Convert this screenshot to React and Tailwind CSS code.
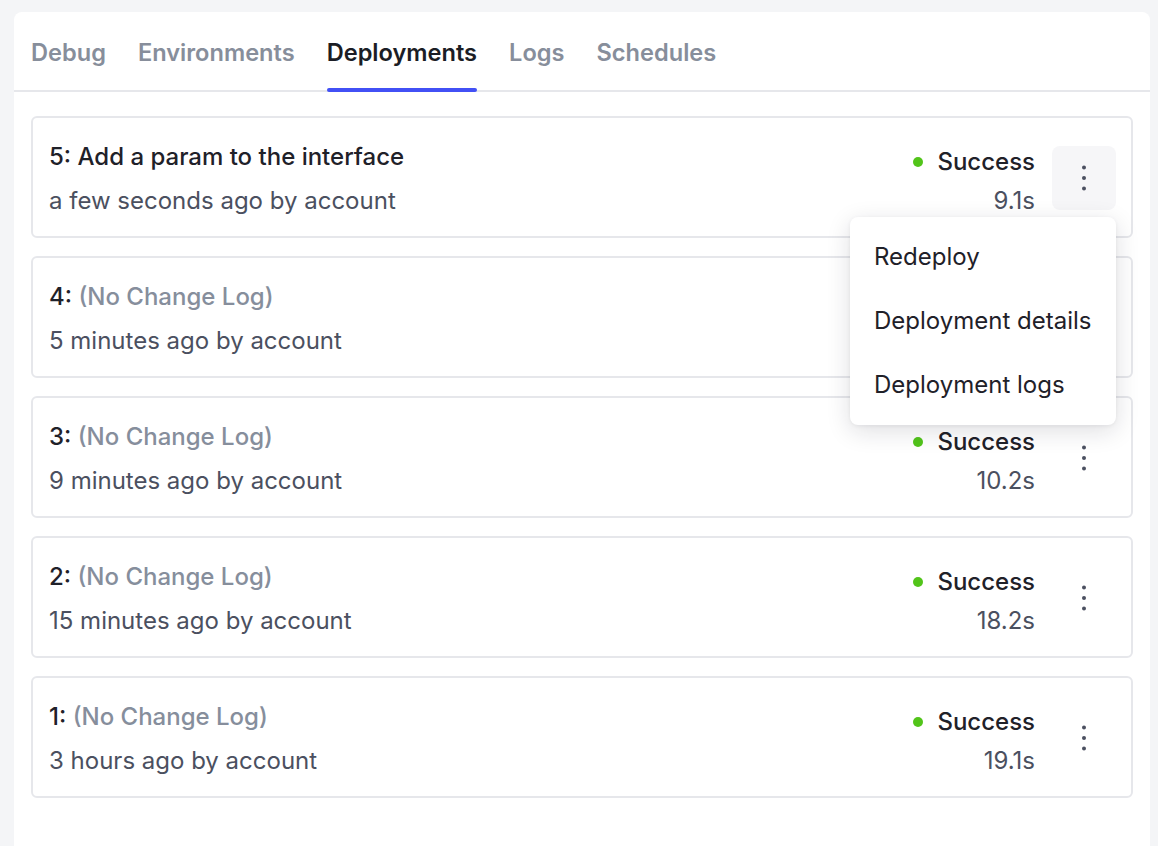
import React from "react";

const deployments = [
  { id: 5, title: "Add a param to the interface", when: "a few seconds ago", time: "9.1s", open: true },
  { id: 4, title: null, when: "5 minutes ago", time: "9.8s" },
  { id: 3, title: null, when: "9 minutes ago", time: "10.2s" },
  { id: 2, title: null, when: "15 minutes ago", time: "18.2s" },
  { id: 1, title: null, when: "3 hours ago", time: "19.1s" },
];

const tabs = ["Debug", "Environments", "Deployments", "Logs", "Schedules"];

function Kebab() {
  return (
    <svg width="6" height="26" viewBox="0 0 6 26" className="text-[#4b5060]">
      <circle cx="3" cy="2.5" r="2" fill="currentColor" />
      <circle cx="3" cy="13" r="2" fill="currentColor" />
      <circle cx="3" cy="23.5" r="2" fill="currentColor" />
    </svg>
  );
}

function Menu() {
  return (
    <div className="absolute right-0 top-[71px] z-20 w-[266px] rounded-lg bg-white py-2 shadow-[0_6px_24px_rgba(20,24,40,0.14),0_1px_4px_rgba(20,24,40,0.06)]">
      {["Redeploy", "Deployment details", "Deployment logs"].map((item) => (
        <div key={item} className="flex h-16 items-center whitespace-nowrap px-6 text-[24px] text-[#1f2129]">
          {item}
        </div>
      ))}
    </div>
  );
}

function DeploymentCard({ d }) {
  return (
    <div className="flex items-start rounded-md border-2 border-[#e6e7eb] bg-white pt-[23px] pb-[21px] pl-4 pr-[15px]">
      <div className="flex flex-1 flex-col gap-4 pt-[2px]">
        <div className="text-[24px] font-medium leading-7 text-[#1f2129]">
          {d.id}:{" "}
          {d.title ? d.title : <span className="text-[#868e9c]">(No Change Log)</span>}
        </div>
        <div className="text-[24px] leading-7 text-[#4b5060]">{d.when} by account</div>
      </div>
      <div className="flex flex-col items-end gap-[11px] pt-[7px]">
        <div className="flex items-center gap-[14px] text-[24px] font-medium leading-7 text-[#1f2129]">
          <span className="h-[10px] w-[10px] rounded-full bg-[#52c41a]" />
          Success
        </div>
        <div className="text-[24px] leading-7 text-[#4b5060]">{d.time}</div>
      </div>
      <div className="relative ml-[17px] self-center">
        <div className={`flex h-16 w-16 items-center justify-center rounded-lg ${d.open ? "bg-[#f6f6f8]" : ""}`}>
          <Kebab />
        </div>
        {d.open && <Menu />}
      </div>
    </div>
  );
}

export default function App() {
  return (
    <div className="min-h-[846px] bg-[#f4f5f7] pl-[14px] pr-2 pt-3" style={{ fontFamily: "Inter, 'Noto Sans', sans-serif" }}>
      <div className="min-h-[834px] rounded-t-lg bg-white">
        <div className="flex h-[80px] items-stretch gap-8 border-b-2 border-[#e6e7eb] px-[17px]">
          {tabs.map((t) => (
            <div
              key={t}
              className={`relative flex items-center pt-1 text-[23.6px] font-semibold ${t === "Deployments" ? "text-[#1b1d25]" : "text-[#878e9b]"}`}
            >
              {t}
              {t === "Deployments" && (
                <span className="absolute -bottom-[2px] left-0 right-0 h-[4px] rounded-full bg-[#4250f5]" />
              )}
            </div>
          ))}
        </div>
        <div className="flex flex-col gap-[18px] px-[17px] pt-[24px] pb-8">
          {deployments.map((d) => (
            <DeploymentCard key={d.id} d={d} />
          ))}
        </div>
      </div>
    </div>
  );
}
